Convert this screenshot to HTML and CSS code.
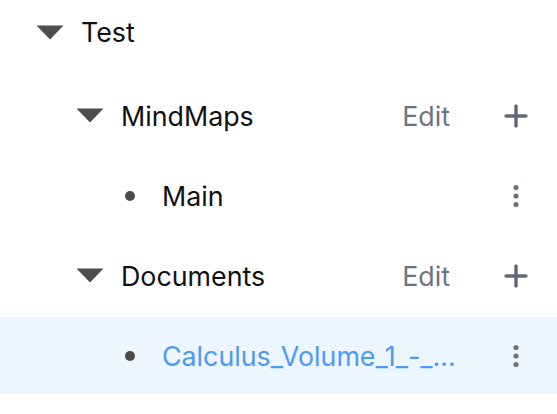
FILE: index.html
```html
<!DOCTYPE html>
<html lang="en">
<head>
<meta charset="utf-8">
<title>Tree</title>
<link rel="stylesheet" href="styles.css">
</head>
<body>
<div class="tree">
  <div class="row row-root">
    <svg class="caret" width="28" height="15" viewBox="0 0 28 15"><polygon points="0.5,0.5 27.5,0.5 14,14.5" /></svg>
    <span class="label">Test</span>
  </div>

  <div class="row level1">
    <svg class="caret" width="28" height="15" viewBox="0 0 28 15"><polygon points="0.5,0.5 27.5,0.5 14,14.5" /></svg>
    <span class="label">MindMaps</span>
    <span class="edit">Edit</span>
    <span class="icon-box">
      <svg width="24" height="24" viewBox="0 0 24 24"><path d="M12 2v20M2 12h20" stroke="currentColor" stroke-width="3.4" stroke-linecap="round" fill="none"/></svg>
    </span>
  </div>

  <div class="row level2">
    <span class="bullet"></span>
    <span class="label">Main</span>
    <span class="icon-box">
      <svg width="24" height="24" viewBox="0 0 24 24"><circle cx="12" cy="3.5" r="2.6"/><circle cx="12" cy="12" r="2.6"/><circle cx="12" cy="20.5" r="2.6"/></svg>
    </span>
  </div>

  <div class="row level1">
    <svg class="caret" width="28" height="15" viewBox="0 0 28 15"><polygon points="0.5,0.5 27.5,0.5 14,14.5" /></svg>
    <span class="label">Documents</span>
    <span class="edit">Edit</span>
    <span class="icon-box">
      <svg width="24" height="24" viewBox="0 0 24 24"><path d="M12 2v20M2 12h20" stroke="currentColor" stroke-width="3.4" stroke-linecap="round" fill="none"/></svg>
    </span>
  </div>

  <div class="row level2 selected">
    <span class="bullet"></span>
    <span class="label">Calculus_Volume_1_-_...</span>
    <span class="icon-box">
      <svg width="24" height="24" viewBox="0 0 24 24"><circle cx="12" cy="3.5" r="2.6"/><circle cx="12" cy="12" r="2.6"/><circle cx="12" cy="20.5" r="2.6"/></svg>
    </span>
  </div>
</div>
</body>
</html>
```

FILE: styles.css
```css
* { box-sizing: border-box; }

html, body {
  margin: 0;
  padding: 0;
  background: #ffffff;
}

body {
  font-family: Inter, "Noto Sans", "Liberation Sans", sans-serif;
  font-size: 26.8px;
  color: #111111;
  width: 557px;
  height: 414px;
  overflow: hidden;
}

.tree {
  display: flex;
  flex-direction: column;
}

.row {
  display: flex;
  align-items: center;
  height: 77px;
  margin-bottom: 3px;
  padding-right: 29px;
}

.row-root {
  height: 64px;
  margin-bottom: 13px;
  padding-left: 36px;
}

.level1 {
  padding-left: 76px;
}

.level2 {
  padding-left: 125px;
}

.caret {
  flex: none;
  fill: #4d4d4d;
  margin-right: 17px;
}

.bullet {
  flex: none;
  width: 10px;
  height: 10px;
  border-radius: 50%;
  background: #4a4a4a;
  margin-right: 27px;
}

.label {
  flex: 1;
  min-width: 0;
  white-space: nowrap;
  overflow: hidden;
  text-overflow: ellipsis;
  line-height: 34px;
}

.edit {
  flex: none;
  color: #6b7482;
  margin-right: 54px;
  line-height: 34px;
}

.icon-box {
  flex: none;
  width: 24px;
  height: 24px;
  display: flex;
  align-items: center;
  justify-content: center;
  color: #5f6978;
  fill: #6b7280;
}

.icon-box svg { display: block; }

.selected {
  background: #edf5fe;
}

.selected .label {
  color: #4a9bf5;
  margin-right: 20px;
}
```
